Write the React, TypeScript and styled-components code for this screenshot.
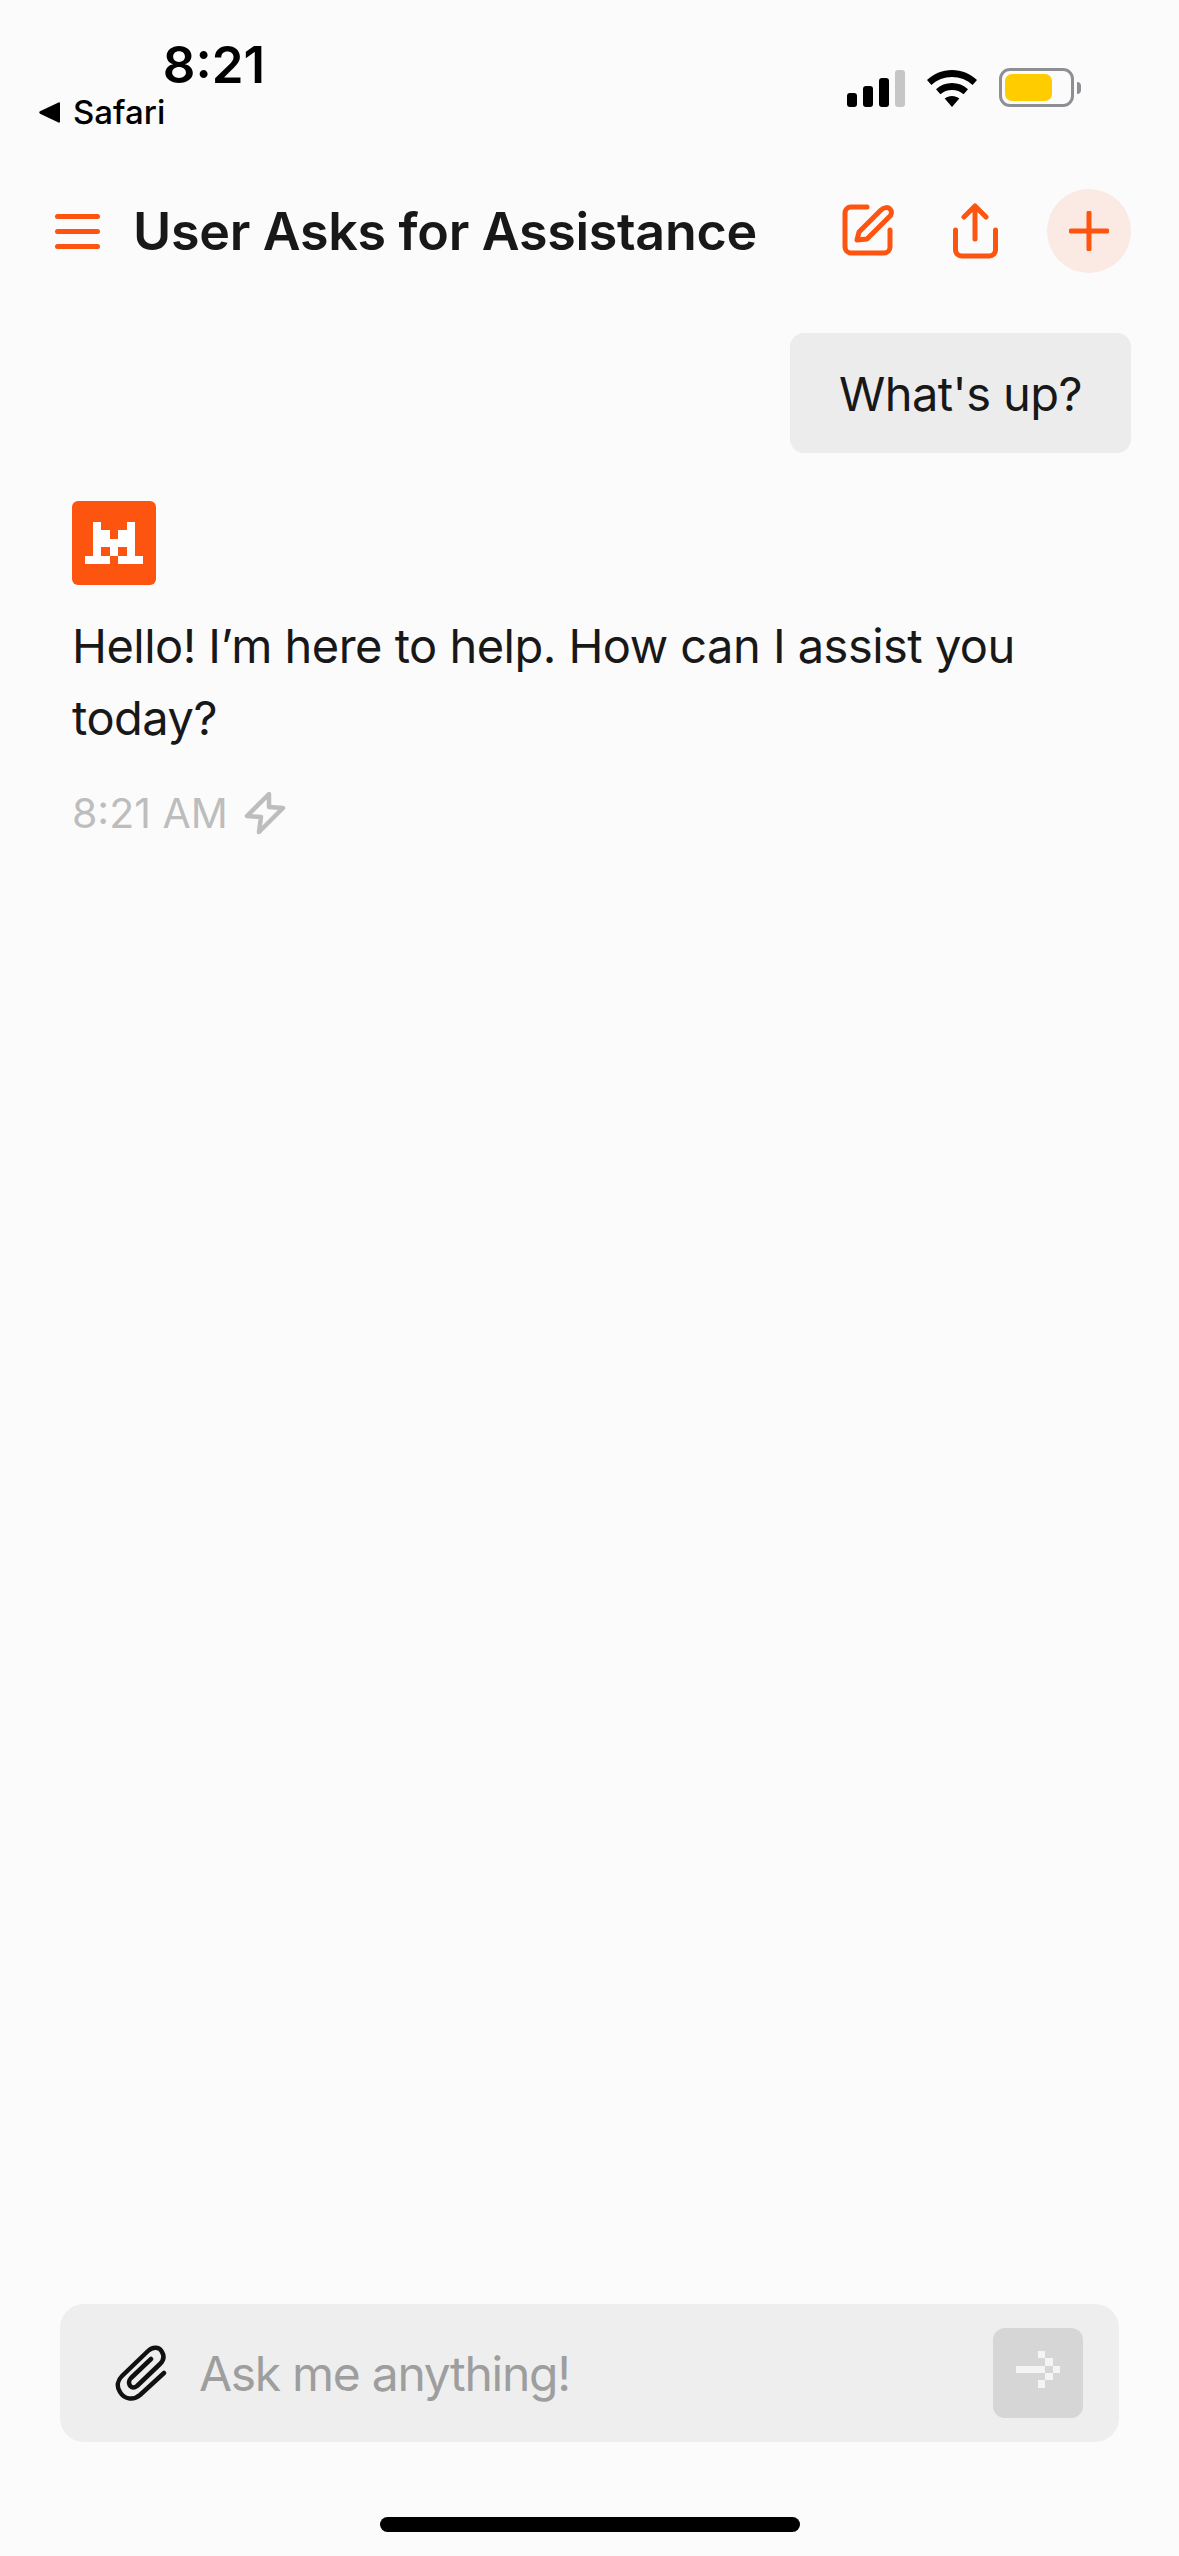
import styled, { createGlobalStyle } from "styled-components";

const ORANGE = "#fd5410";

const GlobalStyle = createGlobalStyle`
  html, body {
    margin: 0;
    padding: 0;
    background: #fbfbfb;
  }
  * {
    box-sizing: border-box;
  }
`;

// 7 x 5 grid of the mascot mark, row by row
const LOGO_CELLS = [
  "0100010",
  "0110110",
  "0111110",
  "0101010",
  "1110111",
];

const ARROW_CELLS: [number, number][] = [
  [0, 3], [1, 3], [2, 3], [3, 3],
  [3, 1], [4, 2], [5, 3], [4, 4], [3, 5],
];

const SIGNAL_BARS = [14, 21, 29, 37];

const App = () => {
  return (
    <Page>
      <GlobalStyle />
      <StatusBar>
        <StatusLeft>
          <Clock>8:21</Clock>
          <BackLink>
            <BackArrow viewBox="0 0 21 21">
              <path d="M21 1.500v18c0 1-.7 1.500-1.500 1L1 11.700c-1-.6-1-1.800 0-2.400L19.500.5c.8-.5 1.500 0 1.500 1z" fill="#000" />
            </BackArrow>
            Safari
          </BackLink>
        </StatusLeft>
        <StatusIcons>
          <Signal>
            {SIGNAL_BARS.map((h, i) => (
              <SignalBar key={h} $height={h} $off={i === 3} />
            ))}
          </Signal>
          <svg width="50" height="37" viewBox="0 0 50 37">
            <path d="M25 0c9.400 0 18 3.600 25 10l-4.400 5C40 9.800 32.800 7 25 7S10 9.800 4.400 15L0 10C7 3.600 15.600 0 25 0z" />
            <path d="M25 13c6 0 11.500 2.200 16 6.200l-4.400 5C33.400 21.500 29.400 20 25 20s-8.400 1.500-11.600 4.200l-4.400-5C13.500 15.200 19 13 25 13z" />
            <path d="M25 26c2.800 0 5.300.9 7.300 2.600L25 37l-7.300-8.400C19.700 26.900 22.200 26 25 26z" />
          </svg>
          <Battery>
            <BatteryBody>
              <BatteryFill />
            </BatteryBody>
            <BatteryCap />
          </Battery>
        </StatusIcons>
      </StatusBar>

      <Header>
        <MenuIcon>
          <MenuLine />
          <MenuLine />
          <MenuLine />
        </MenuIcon>
        <Title>User Asks for Assistance</Title>
        <HeaderActions>
          <EditIcon viewBox="0 0 52 54" fill="none" stroke={ORANGE} strokeWidth="5" strokeLinecap="round" strokeLinejoin="round">
            <path d="M25 3H9a6 6 0 0 0-6 6v34a6 6 0 0 0 6 6h33a6 6 0 0 0 6-6V26" />
            <path d="M15 36l2-8L39 6c3-3 7-3 9-1s2 6-1 8L25 35z" />
          </EditIcon>
          <svg width="45" height="56" viewBox="0 0 45 56" fill="none" stroke={ORANGE} strokeWidth="5" strokeLinecap="round" strokeLinejoin="round">
            <path d="M22 36V3M11 14L22 3l11 11" />
            <path d="M2.500 27v20a6 6 0 0 0 6 6h28a6 6 0 0 0 6-6V27" />
          </svg>
          <PlusButton>
            <svg width="40" height="40" viewBox="0 0 40 40" stroke={ORANGE} strokeWidth="5" strokeLinecap="round">
              <path d="M20 2v36M2 20h36" />
            </svg>
          </PlusButton>
        </HeaderActions>
      </Header>

      <Thread>
        <UserBubble>What's up?</UserBubble>
        <Reply>
          <Avatar>
            <svg width="60" height="42" viewBox="0 0 7 5" shapeRendering="crispEdges" fill="#fff">
              {LOGO_CELLS.map((row, y) =>
                row.split("").map((cell, x) =>
                  cell === "1" ? <rect key={`${x}-${y}`} x={x} y={y} width="1" height="1" /> : null
                )
              )}
            </svg>
          </Avatar>
          <ReplyText>Hello! I’m here to help. How can I assist you today?</ReplyText>
          <ReplyMeta>
            8:21 AM
            <svg width="42" height="44" viewBox="0 0 42 44" fill="none" stroke="#bdbdbd" strokeWidth="4.500" strokeLinecap="round" strokeLinejoin="round">
              <path d="M25 3L3 25l14 1-2 15 24-24-14-1z" />
            </svg>
          </ReplyMeta>
        </Reply>
      </Thread>

      <Composer>
        <ClipIcon viewBox="14 13 54 60" fill="none" stroke="#111" strokeWidth="4.500" strokeLinecap="round" strokeLinejoin="round">
          <path d="M64 43L40 65c-7 6-16 4-20-3-4-6-2-12 2-16L48 21c5-5 12-4 14 1 3 5 1 9-2 12L37 56c-4 3-8 1-8-4 0-1 1-3 2-4l20-19" />
        </ClipIcon>
        <Placeholder>Ask me anything!</Placeholder>
        <SendButton>
          <svg width="44" height="44" viewBox="0 0 6 6" shapeRendering="crispEdges" fill="#f4f4f4">
            {ARROW_CELLS.map(([x, y]) => (
              <rect key={`${x}-${y}`} x={x} y={y - 1} width="1" height="1" />
            ))}
          </svg>
        </SendButton>
      </Composer>

      <HomeBar />
    </Page>
  );
};

export default App;

const Page = styled.div`
  width: 1179px;
  height: 2556px;
  display: flex;
  flex-direction: column;
  background: #fbfbfb;
  color: #181818;
  font-family: Inter, "Liberation Sans", sans-serif;
  overflow: hidden;
`;

const StatusBar = styled.div`
  height: 189px;
  flex: none;
  display: flex;
  justify-content: space-between;
  align-items: flex-start;
  padding: 37px 98px 0 39px;
`;

const StatusLeft = styled.div`
  display: flex;
  flex-direction: column;
  align-items: flex-end;
  width: 226px;
`;

const Clock = styled.div`
  font-size: 51px;
  font-weight: 600;
  line-height: 55px;
  color: #000;
`;

const BackLink = styled.div`
  align-self: stretch;
  display: flex;
  align-items: center;
  gap: 13px;
  font-size: 33px;
  font-weight: 500;
  line-height: 40px;
  color: #000;
`;

const BackArrow = styled.svg`
  width: 21px;
  height: 21px;
`;

const StatusIcons = styled.div`
  display: flex;
  align-items: flex-end;
  gap: 22px;
  padding-top: 31px;
`;

const Signal = styled.div`
  display: flex;
  align-items: flex-end;
  gap: 6px;
`;

const SignalBar = styled.div<{ $height: number; $off?: boolean }>`
  width: 10px;
  height: ${(p) => p.$height}px;
  border-radius: 3px;
  background: ${(p) => (p.$off ? "#c6c6c6" : "#000")};
`;

const Battery = styled.div`
  display: flex;
  align-items: center;
  gap: 3px;
`;

const BatteryBody = styled.div`
  width: 75px;
  height: 39px;
  padding: 3px;
  border: 3px solid #8e8e93;
  border-radius: 11px;
`;

const BatteryFill = styled.div`
  width: 47px;
  height: 100%;
  border-radius: 7px;
  background: #ffcc00;
`;

const BatteryCap = styled.div`
  width: 4px;
  height: 12px;
  border-radius: 0 6px 6px 0;
  background: #8e8e93;
`;

const Header = styled.div`
  height: 84px;
  flex: none;
  display: flex;
  align-items: center;
  padding: 0 48px 0 55px;
`;

const MenuIcon = styled.div`
  width: 45px;
  display: flex;
  flex-direction: column;
  gap: 10px;
  margin-right: 33px;
`;

const MenuLine = styled.div`
  height: 5px;
  border-radius: 3px;
  background: ${ORANGE};
`;

const Title = styled.h1`
  flex: 1;
  margin: 0;
  font-size: 52px;
  font-weight: 600;
  letter-spacing: -0.3px;
  white-space: nowrap;
  color: #181818;
`;

const HeaderActions = styled.div`
  display: flex;
  align-items: center;
  gap: 49px;
`;

const EditIcon = styled.svg`
  width: 52px;
  height: 54px;
  margin-right: 10px;
`;

const PlusButton = styled.div`
  width: 84px;
  height: 84px;
  display: flex;
  align-items: center;
  justify-content: center;
  border-radius: 50%;
  background: #fbe9e3;
`;

const Thread = styled.div`
  flex: 1;
  display: flex;
  flex-direction: column;
  padding: 60px 48px 0 72px;
`;

const UserBubble = styled.div`
  align-self: flex-end;
  width: 341px;
  height: 120px;
  display: flex;
  align-items: center;
  justify-content: center;
  border-radius: 14px;
  background: #ececec;
  font-size: 47px;
  letter-spacing: -0.55px;
  color: #181818;
`;

const Reply = styled.div`
  margin-top: 48px;
  display: flex;
  flex-direction: column;
`;

const Avatar = styled.div`
  width: 84px;
  height: 84px;
  display: flex;
  align-items: center;
  justify-content: center;
  border-radius: 6px;
  background: ${ORANGE};
`;

const ReplyText = styled.div`
  margin-top: 25px;
  width: 980px;
  font-size: 47px;
  letter-spacing: -0.52px;
  line-height: 72px;
  color: #181818;
`;

const ReplyMeta = styled.div`
  margin-top: 33px;
  display: flex;
  align-items: center;
  gap: 16px;
  font-size: 41px;
  line-height: 52px;
  color: #bdbdbd;
`;

const Composer = styled.div`
  flex: none;
  height: 138px;
  margin: 0 60px;
  display: flex;
  align-items: center;
  padding: 0 36px 0 54px;
  border-radius: 24px;
  background: #eeeeee;
`;

const ClipIcon = styled.svg`
  width: 54px;
  height: 60px;
  flex: none;
`;

const Placeholder = styled.div`
  flex: 1;
  margin-left: 31px;
  font-size: 48px;
  letter-spacing: -1.3px;
  color: #9e9e9e;
`;

const SendButton = styled.div`
  width: 90px;
  height: 90px;
  display: flex;
  align-items: center;
  justify-content: center;
  border-radius: 12px;
  background: #d6d6d6;
`;

const HomeBar = styled.div`
  flex: none;
  width: 420px;
  height: 15px;
  margin: 75px auto 24px;
  border-radius: 8px;
  background: #000;
`;
